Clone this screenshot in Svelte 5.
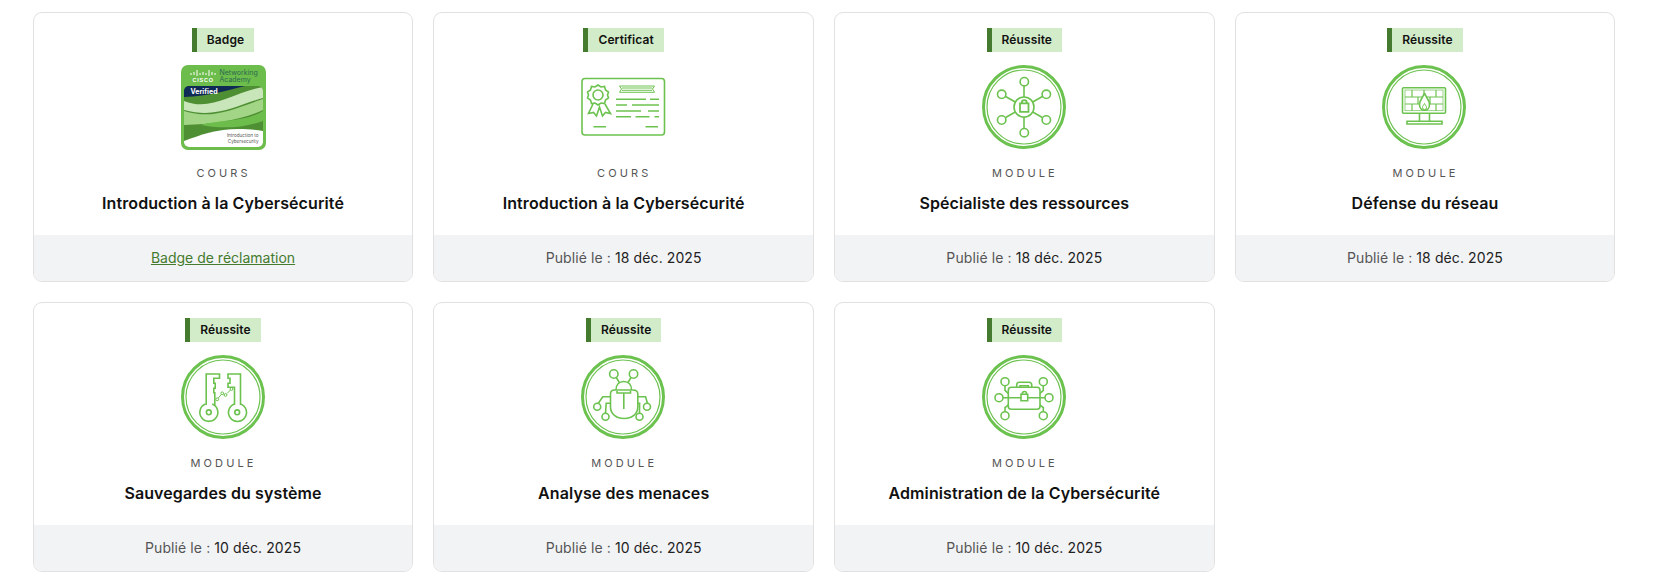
<script>
  const cards = [
    { tag: 'Badge', icon: 'badge', kind: 'COURS', title: 'Introduction à la Cybersécurité', link: 'Badge de réclamation' },
    { tag: 'Certificat', icon: 'cert', kind: 'COURS', title: 'Introduction à la Cybersécurité', date: '18 déc. 2025' },
    { tag: 'Réussite', icon: 'network', kind: 'MODULE', title: 'Spécialiste des ressources', date: '18 déc. 2025' },
    { tag: 'Réussite', icon: 'firewall', kind: 'MODULE', title: 'Défense du réseau', date: '18 déc. 2025' },
    { tag: 'Réussite', icon: 'keys', kind: 'MODULE', title: 'Sauvegardes du système', date: '10 déc. 2025' },
    { tag: 'Réussite', icon: 'bug', kind: 'MODULE', title: 'Analyse des menaces', date: '10 déc. 2025' },
    { tag: 'Réussite', icon: 'case', kind: 'MODULE', title: 'Administration de la Cybersécurité', date: '10 déc. 2025' }
  ];
</script>

<main class="grid">
  {#each cards as c}
    <article class="card">
      <div class="body">
        <span class="tag">{c.tag}</span>
        <div class="pic">
          {#if c.icon === 'badge'}
            <svg viewBox="0 0 85 85" width="85" height="85">
              <defs><clipPath id="wave"><rect x="3" y="21" width="79" height="61" rx="5" /></clipPath></defs>
              <rect width="85" height="85" rx="7" fill="#6cbd4b" />
              <g stroke="#fff" stroke-width="1">
                <path d="M10 8v2M13 7v3M16 5v6M19 8v2M22 7v3M25 8v2M28 5v6M31 7v3M34 8v2" />
              </g>
              <text x="11.500" y="17" class="cisco">CISCO</text>
              <text x="38.500" y="9.500" class="na">Networking</text>
              <text x="38.500" y="17" class="na">Academy</text>
              <g clip-path="url(#wave)">
                <rect x="3" y="21" width="79" height="61" fill="#4f8f34" />
                <path d="M3 21H64C48 25 28 31 3 32Z" fill="#0f2a55" />
                <path d="M3 36C30 47 50 28 82 22V33C56 40 36 54 3 45Z" fill="#c8e6b9" />
                <path d="M3 46C32 55 52 44 82 34V45C60 55 34 59 3 60Z" fill="#a2d686" />
                <path d="M20 60C40 54 62 58 82 46V56C62 63 40 64 20 60Z" fill="#6cbd4b" />
                <path d="M3 82V76C24 68 46 60 82 66V82Z" fill="#fff" />
              </g>
              <text x="9.500" y="28.500" class="ver">Verified</text>
              <text x="77.500" y="71.700" class="intro">Introduction to</text>
              <text x="77.500" y="77.700" class="intro">Cybersecurity</text>
            </svg>
          {:else if c.icon === 'cert'}
            <svg viewBox="0 0 85 85" width="85" height="85" class="line">
              <rect x="1" y="13.500" width="82.500" height="56.500" rx="3" />
              <circle cx="17" cy="30" r="5" />
              <path d="M17 20l3 2 3.500-.500 1 3.500 3 2-1 3 1 3-3 2-1 3.500-3.500-.500-3 2-3-2-3.500.500-1-3.500-3-2 1-3-1-3 3-2 1-3.500 3.500.500Z" />
              <path d="M12 39l-4.500 9.500 5-1 3 3.500 3-9 3 9 3-3.500 5 1L24 39" />
              <path d="M38.500 21h35l-2 3 2 3.300h-35l2-3.300ZM41 23h30M41 25.300h30" stroke-width="1" />
              <path d="M35 34.300h30M69 34.300h9M35 40h11M51 40h27M35 46h25M67 46h11M35 51.700h15M54.500 51.700h14M73.500 51.700h4.500M12.500 61.700h12.500M64.500 61.700h12.500" />
            </svg>
          {:else}
            <svg viewBox="0 0 85 85" width="85" height="85" class="line">
              <circle cx="42" cy="42" r="40.500" stroke-width="3" />
              <circle cx="42" cy="42" r="37" stroke-width="1.200" />
              {#if c.icon === 'network'}
                <circle cx="42" cy="42" r="10" />
                <path d="M38 38.300h8.500v8.500H38ZM39.800 38.300v-.6a2.500 2.500 0 0 1 5 0v.6" stroke-width="1.800" />
                <path d="M42 32v-11M42 52v11M33.300 37l-9.700-5.500M50.700 37l9.700-5.500M33.300 47l-9.700 5.500M50.700 47l9.700 5.500" />
                <circle cx="42.300" cy="16.700" r="4.200" /><circle cx="42.300" cy="67.700" r="4.200" />
                <circle cx="19.700" cy="29.300" r="4.200" /><circle cx="64.300" cy="29.300" r="4.200" />
                <circle cx="19.700" cy="55" r="4.200" /><circle cx="64.300" cy="55" r="4.200" />
              {:else if c.icon === 'firewall'}
                <rect x="20.500" y="22.700" width="43" height="25.500" rx="1" />
                <rect x="23" y="25" width="38" height="20.700" stroke-width=".7" />
                <path d="M23 32h38M23 39h38M30 25v7M42 25v7M54 25v7M36 32v7M48 32v7M30 39v6.700M54 39v6.700" stroke-width="1.200" />
                <path d="M42.500 28c1 4 5 6.500 5 11.500 0 3.500-2.200 5.800-5 5.800s-5-2.300-5-5.800c0-5 4-7.500 5-11.500Z" class="solid" />
                <path d="M42.500 38.500c.7 1.500 2 2.500 2 4a2 2 0 0 1-4 0c0-1.500 1.300-2.500 2-4Z" stroke-width="1" />
                <path d="M37.500 48.200v8M47.500 48.200v8M25 56.200h35v2.800H25Z" />
              {:else if c.icon === 'keys'}
                <path d="M25.200 50V19h13.300v4.300h-5.700v5h1.400v5h-1.400v4.500h1v12.200" />
                <path d="M24.500 49a9 9 0 1 0 6.700 0" />
                <circle cx="27.800" cy="57.300" r="2.400" />
                <path d="M59.500 50V19H47v4.300h2v5h-2v4h6.500V50" />
                <path d="M53.500 49a9 9 0 1 0 6 0" />
                <circle cx="56.200" cy="57.300" r="2.400" />
                <path d="M37.300 43l3-3.500M42.500 39l1 .5M46 38.500l3.500-3.500" stroke-width="1" />
                <circle cx="36.200" cy="44.300" r="1.400" stroke-width="1" /><circle cx="41.200" cy="38.300" r="1.400" stroke-width="1" /><circle cx="44.500" cy="40" r="1.400" stroke-width="1" /><circle cx="50.500" cy="34" r="1.400" stroke-width="1" />
              {:else if c.icon === 'bug'}
                <circle cx="32.800" cy="19" r="4.200" /><circle cx="52.500" cy="19" r="4.200" />
                <path d="M35.300 22.500l3 5M50 22.500l-3 5" />
                <path d="M35 35c0-5 3-8.500 7.800-8.500s7.700 3.500 7.700 8.500" />
                <path d="M29.500 39c0-2.500 1.500-4 4-4h18.500c3 0 4.800 1.500 4.800 4v13c0 7-6 11.500-13.700 11.500S29.500 59 29.500 52Z" />
                <path d="M36 36v2h13.500v-2M42.800 38V54" />
                <path d="M29.500 41.700h-7.700l-4.500 6.500M56.800 41.700h7.700l2 6.500M29.500 48.300h-4.300l-.7 10M56.800 48.300h1.800l-.1 10" />
                <circle cx="16.200" cy="51.700" r="3.500" /><circle cx="66" cy="51.700" r="3.500" />
                <circle cx="24.500" cy="61.700" r="3.500" /><circle cx="58.500" cy="61.700" r="3.500" />
              {:else}
                <rect x="26.300" y="32.300" width="31.700" height="22" rx="3" />
                <path d="M34.700 32.300v-2.500a2.500 2.500 0 0 1 2.500-2.500h10a2.500 2.500 0 0 1 2.500 2.500v2.500M38 32.300v-1.500h8.300v1.500" />
                <path d="M26.300 42.700h12.700M46 42.700h12" />
                <path d="M39 39.300h6.700v6.400H39ZM40.200 39.300v-.6a2.200 2.200 0 0 1 4.400 0v.6" stroke-width="1.600" />
                <path d="M23 30.800v4.500l3.300 3.200M61.300 30.800v4.500l-3.300 3.200M21 42.700h5.300M58 42.700h5M23 56.600v-4l3.300-2.600M61.300 56.600v-4l-3.300-2.600" />
                <circle cx="23" cy="26.700" r="4" /><circle cx="61.300" cy="26.700" r="4" />
                <circle cx="17" cy="42.700" r="4" /><circle cx="67" cy="42.700" r="4" />
                <circle cx="23" cy="60.700" r="4" /><circle cx="61.300" cy="60.700" r="4" />
              {/if}
            </svg>
          {/if}
        </div>
        <p class="kind">{c.kind}</p>
        <h3>{c.title}</h3>
      </div>
      <footer>
        {#if c.link}
          <a href="#claim">{c.link}</a>
        {:else}
          <span class="lbl">Publié le :</span> <span class="date">{c.date}</span>
        {/if}
      </footer>
    </article>
  {/each}
</main>

<style>
  :global(body) { margin: 0; background: #fff; font-family: Inter, "Liberation Sans", sans-serif; }
  .grid {
    display: grid;
    grid-template-columns: repeat(4, 380.67px);
    gap: 20px;
    padding: 12px 0 0 32.7px;
    letter-spacing: .1px;
  }
  .card {
    box-sizing: border-box;
    height: 270px;
    border: 1px solid #e1e1e1;
    border-radius: 9px;
    overflow: hidden;
    display: flex;
    flex-direction: column;
    background: #fff;
  }
  .body {
    flex: 1;
    display: flex;
    flex-direction: column;
    align-items: center;
    padding-top: 15px;
  }
  .tag {
    box-sizing: border-box;
    height: 24px;
    line-height: 24px;
    padding: 0 10px;
    border-left: 5px solid #447b2e;
    background: #d2ecc9;
    color: #111;
    font-size: 12px;
    font-weight: 600;
  }
  .pic { margin-top: 13px; width: 85px; height: 85px; }
  .pic svg { display: block; }
  .line { fill: none; stroke: #6cc24f; stroke-width: 1.600; }
  .solid { fill: #fff; }
  .kind {
    margin: 16px 0 0;
    font-size: 11px;
    line-height: 14px;
    letter-spacing: 3.100px;
    color: #555;
    padding-left: 1px;
  }
  h3 {
    margin: 11px 0 0;
    font-size: 16px;
    line-height: 24px;
    font-weight: 600;
    color: #111;
  }
  footer {
    box-sizing: border-box;
    height: 46px;
    padding-bottom: 2px;
    flex: none;
    background: #f2f3f5;
    display: flex;
    align-items: center;
    justify-content: center;
    gap: 4px;
    font-size: 14px;
  }
  .lbl { color: #555; }
  .date { color: #222; }
  a { color: #447b2e; text-decoration: underline; letter-spacing: 0; }
  .cisco { fill: #fff; font: 700 5.500px "Liberation Sans", sans-serif; letter-spacing: .8px; }
  .na { fill: #2a6a50; font: 400 7px Inter, sans-serif; letter-spacing: 0; }
  .ver { fill: #fff; font: 700 7px Inter, sans-serif; letter-spacing: 0; }
  .intro { fill: #555; font: 400 4.600px Inter, sans-serif; text-anchor: end; letter-spacing: 0; }
</style>
